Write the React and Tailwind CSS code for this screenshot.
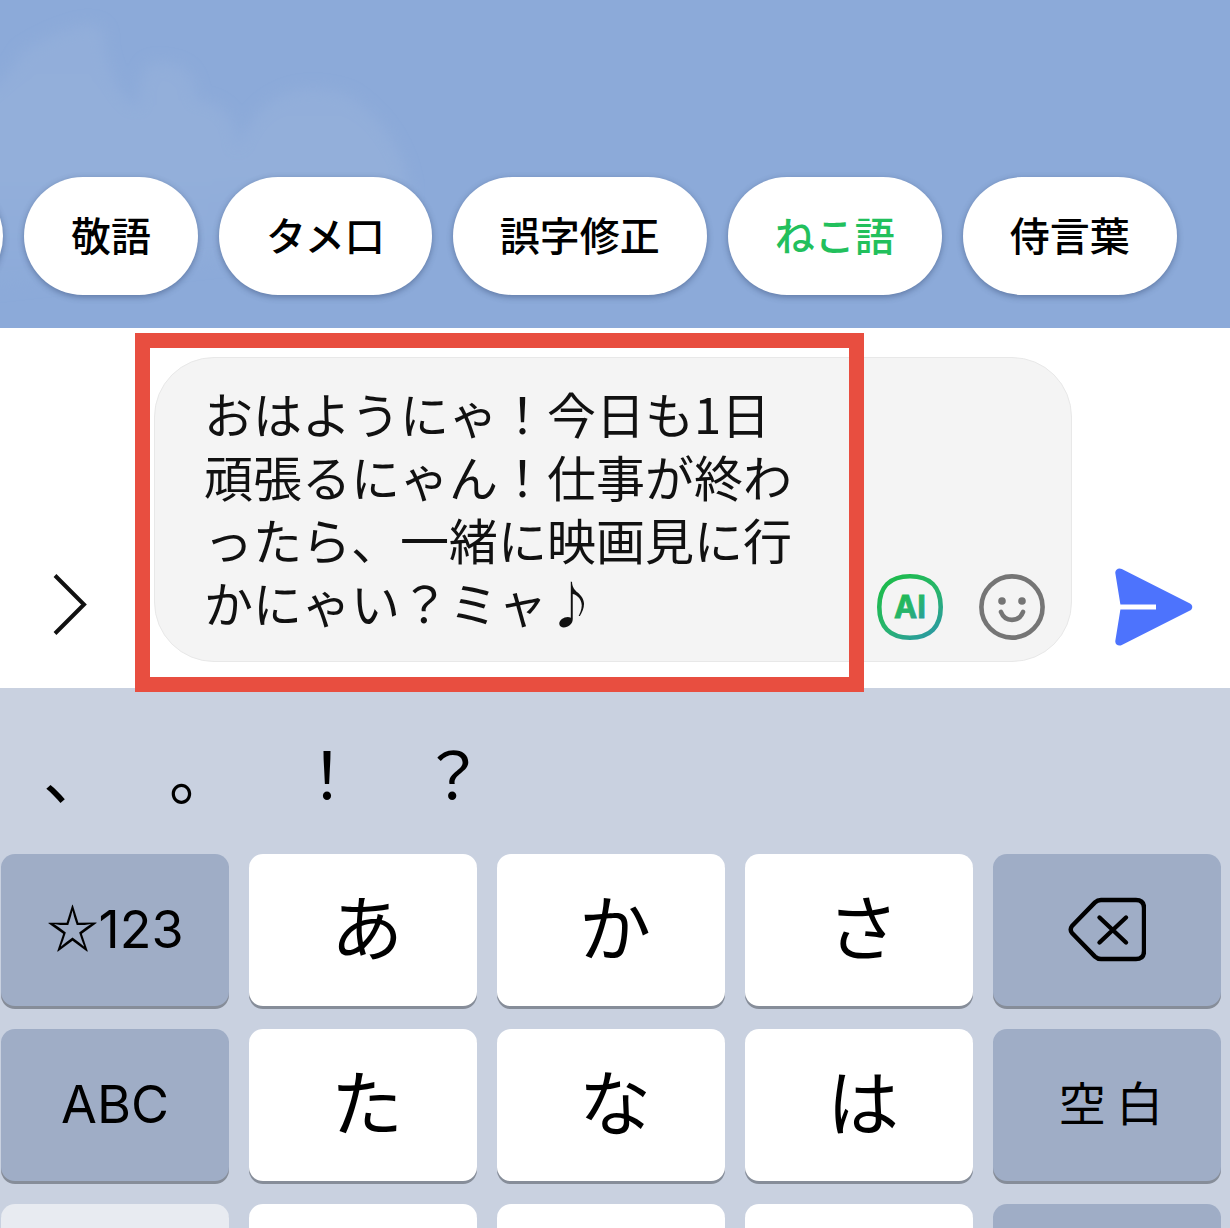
import React, {useState} from "react";
import clsx from "clsx";

const tones = [
    {label: "敬語"},
    {label: "タメ口"},
    {label: "誤字修正"},
    {label: "ねこ語", active: true},
    {label: "侍言葉"},
];

const candidates = ["、", "。", "！", "？"];

const keys = [
    {star: true, label: "123", kind: "mode"},
    {label: "あ", kind: "kana"},
    {label: "か", kind: "kana"},
    {label: "さ", kind: "kana"},
    {name: "削除", kind: "delete"},
    {label: "ABC", kind: "mode"},
    {label: "た", kind: "kana"},
    {label: "な", kind: "kana"},
    {label: "は", kind: "kana"},
    {label: "空 白", kind: "space"},
    {name: "あいう", kind: "current"},
    {name: "ま", kind: "kana"},
    {name: "や", kind: "kana"},
    {name: "ら", kind: "kana"},
    {name: "改行", kind: "mode"},
];

const Clouds = () => (
    <svg className="absolute left-0 top-0 w-[450px] h-[328px]" viewBox="0 0 450 328" aria-hidden="true">
        <defs>
            <filter id="soft" x="-20%" y="-20%" width="140%" height="140%">
                <feGaussianBlur stdDeviation="7"/>
            </filter>
            <linearGradient id="cloud" x1="0" y1="0" x2="0" y2="1">
                <stop offset="0" stopColor="#92aeda"/>
                <stop offset="0.55" stopColor="#93afda"/>
                <stop offset="1" stopColor="#8caad9"/>
            </linearGradient>
        </defs>
        <g filter="url(#soft)">
            <path
                d="M-30 105 Q8 80 22 52 Q56 30 88 24 Q108 26 104 42 Q112 92 138 108 Q138 58 160 62 Q198 64 196 100 Q225 100 236 130 L240 260 L-30 290 Z"
                fill="url(#cloud)"
            />
            <path d="M225 240 Q222 150 262 108 Q300 76 350 96 Q400 130 410 190 L400 240 Z" fill="url(#cloud)"/>
        </g>
    </svg>
);

const ToneBar = () => (
    <header className="relative overflow-hidden bg-[#8caad9] pt-[177px] pb-[33px]">
        <Clouds/>
        <div className="relative flex gap-[21px]">
            <button
                aria-label="前の口調"
                className="shrink-0 w-[174px] -ml-[171px] rounded-full bg-white shadow-[0_2px_6px_rgba(40,60,100,0.45)]"
            />
            {tones.map((tone) => (
                <button
                    key={tone.label}
                    className={clsx(
                        "shrink-0 h-[118px] px-[47px] pb-1 rounded-full bg-white text-[40px] font-medium whitespace-nowrap shadow-[0_2px_6px_rgba(40,60,100,0.45)]",
                        tone.active ? "text-[#22c05c]" : "text-black"
                    )}
                >
                    {tone.label}
                </button>
            ))}
        </div>
    </header>
);

const AiIcon = () => (
    <svg className="w-[66px] h-[66px]" viewBox="0 0 66 66">
        <defs>
            <linearGradient id="ai" x1="0.2" y1="0" x2="0.9" y2="1">
                <stop offset="0" stopColor="#1dbb4c"/>
                <stop offset="0.5" stopColor="#27b56b"/>
                <stop offset="1" stopColor="#2b98a5"/>
            </linearGradient>
        </defs>
        <path
            d="M33 2.3 C53 2.3 63.7 13 63.7 33 C63.7 53 53 63.7 33 63.7 C13 63.7 2.3 53 2.3 33 C2.3 13 13 2.3 33 2.3 Z"
            fill="none" stroke="url(#ai)" strokeWidth="4.6"
        />
        <text
            x="33" y="44" textAnchor="middle" fill="url(#ai)" stroke="url(#ai)" strokeWidth="0.8"
            fontFamily="Inter, sans-serif" fontWeight="700" fontSize="31"
        >
            AI
        </text>
    </svg>
);

const SmileIcon = () => (
    <svg className="w-[66px] h-[66px]" viewBox="0 0 66 66" fill="none" stroke="#757575">
        <circle cx="33" cy="33" r="30.6" strokeWidth="4.6"/>
        <circle cx="23" cy="27" r="3.8" fill="#757575" stroke="none"/>
        <circle cx="43" cy="27" r="3.8" fill="#757575" stroke="none"/>
        <path d="M22 38 C26 48.5 40 48.5 44 38" strokeWidth="4.6" strokeLinecap="round"/>
    </svg>
);

const SendIcon = () => (
    <svg className="w-[78px] h-[78px]" viewBox="0 0 78 78">
        <path
            d="M0.3 5 C0 1.6 3.6 -0.6 6.8 1 L75 35.4 C78 37 78 41 75 42.6 L6.8 77 C3.6 78.6 0 76.4 0.3 73 L5.4 41.6 H41 V36.4 H5.4 Z"
            fill="#4d73fd"
        />
    </svg>
);

const DeleteIcon = () => (
    <svg
        className="w-[78px] h-[66px]" viewBox="0 0 78 66" fill="none" stroke="#000"
        strokeWidth="4.4" strokeLinecap="round" strokeLinejoin="round"
    >
        <path d="M33 3 H68 Q76 3 76 11 V54 Q76 62 68 62 H33 Q29.5 62 27 59.6 L4 36 Q1.4 32.6 4 29 L27 5.4 Q29.5 3 33 3 Z"/>
        <path d="M31.5 20.5 L58 45.5 M58 20.5 L31.5 45.5"/>
    </svg>
);

const Composer = () => {
    const [message, setMessage] = useState(
        "おはようにゃ！今日も1日頑張るにゃん！仕事が終わったら、一緒に映画見に行かにゃい？ミャ♪"
    );

    return (
        <section className="flex items-end bg-white pt-[29px] pb-[26px] pl-[52px] pr-[37px]">
            <button aria-label="メニューを開く" className="mb-[26px] mr-[66px] shrink-0">
                <svg className="w-9 h-[64px]" viewBox="0 0 36 64" fill="none" stroke="#111" strokeWidth="4">
                    <path d="M3 3.5 L32 32.5 L3 61.5"/>
                </svg>
            </button>
            <div className="flex-1 flex items-end rounded-[60px] bg-[#f4f4f4] border border-[#e8e8e8]">
                <div className="relative flex-1 pt-[23px] pb-[28px] pl-[49px] pr-[73px]">
                    <textarea
                        aria-label="メッセージ"
                        rows={4}
                        value={message}
                        onChange={(e) => setMessage(e.target.value)}
                        className="block w-full resize-none overflow-hidden bg-transparent text-[49px] leading-[63px] text-[#111] focus:outline-none"
                    />
                    <div className="pointer-events-none absolute -top-[25px] -bottom-[31px] -left-[20px] right-[13px] border-[15px] border-[#e84e40]"/>
                </div>
                <div className="flex gap-9 pr-[26px] pb-[21px]">
                    <button aria-label="AI"><AiIcon/></button>
                    <button aria-label="スタンプ"><SmileIcon/></button>
                </div>
            </div>
            <button aria-label="送信" className="ml-[43px] mb-[16px] shrink-0"><SendIcon/></button>
        </section>
    );
};

const Keyboard = () => (
    <section className="bg-[#c9d1e0]">
        <div className="flex h-[166px] items-center pl-3">
            {candidates.map((mark) => (
                <button key={mark} className="w-[126px] text-center text-[64px] leading-[80px] text-black">
                    {mark}
                </button>
            ))}
        </div>
        <div className="grid grid-cols-5 gap-x-5 gap-y-[23px] pl-px pr-[9px]">
            {keys.map((key) => (
                <button
                    key={key.label || key.name}
                    aria-label={key.name}
                    className={clsx(
                        "flex items-center justify-center h-[152px] rounded-[14px] text-black shadow-[0_3px_0_#868d99]",
                        key.kind === "kana" && "bg-white pl-2 pb-3 text-[72px]",
                        key.kind === "current" && "bg-[#e8ebf1]",
                        key.kind === "mode" && "bg-[#9fadc6] text-[52px] font-['Inter','Noto_Sans_CJK_JP',sans-serif]",
                        key.kind === "space" && "bg-[#9fadc6] pl-2 pb-2 text-[47px]",
                        key.kind === "delete" && "bg-[#9fadc6]"
                    )}
                >
                    {key.star && <span className="pb-2 font-bold font-['Noto_Sans_CJK_JP',sans-serif]">☆</span>}
                    {key.kind === "delete" ? <DeleteIcon/> : key.label}
                </button>
            ))}
        </div>
    </section>
);

const App = () => (
    <main lang="ja" className="h-screen overflow-hidden bg-[#c9d1e0] font-['Noto_Sans_CJK_JP',sans-serif]">
        <ToneBar/>
        <Composer/>
        <Keyboard/>
    </main>
);

export default App;
